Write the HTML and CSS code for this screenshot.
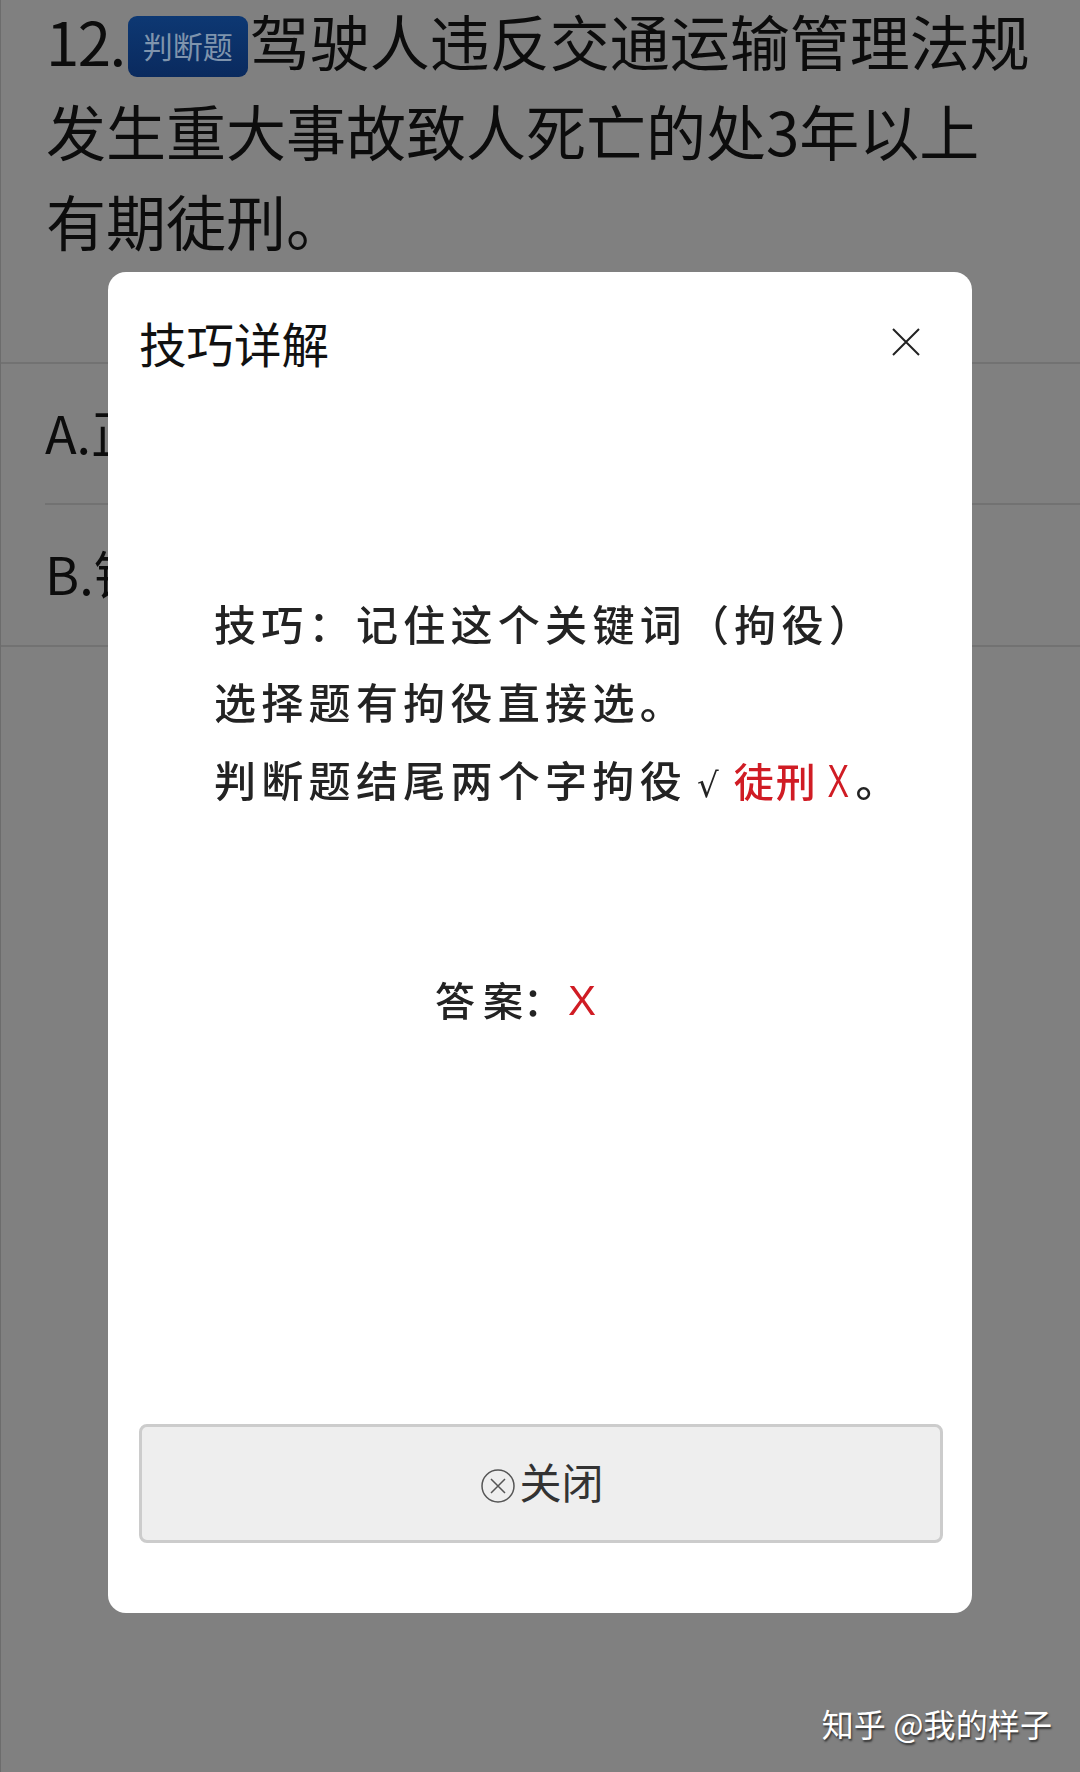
FILE: index.html
```html
<!DOCTYPE html>
<html lang="zh-CN">
<head>
<meta charset="utf-8">
<title>技巧详解</title>
<link rel="stylesheet" href="styles.css">
</head>
<body>
<div class="page">
  <div class="question"><span class="q-num">12.</span><span class="badge">判断题</span>驾驶人违反交通运输管理法规发生重大事故致人死亡的处3年以上有期徒刑。</div>
  <div class="options">
    <div class="option option-a"><span>A.正确</span></div>
    <div class="option option-b"><span>B.错误</span></div>
  </div>
  <div class="modal">
    <div class="modal-head">
      <div class="modal-title">技巧详解</div>
      <svg class="modal-close" viewBox="0 0 28 28" width="28" height="28"><path d="M1 1 L27 27 M27 1 L1 27"/></svg>
    </div>
    <div class="tips">
      <div class="tip-line">技巧&#xFF1A;记住这个关键词&#xFF08;拘役&#xFF09;</div>
      <div class="tip-line">选择题有拘役直接选。</div>
      <div class="tip-line">判断题结尾两个字拘役<span class="tick">√</span><span class="red red-word">徒刑<span class="red-x">X</span></span>。</div>
    </div>
    <div class="answer">答案<span class="answer-colon">&#xFF1A;</span><span class="red answer-x">X</span></div>
    <button class="close-btn">
      <svg class="close-icon" viewBox="0 0 34 34" width="34" height="34"><circle cx="17" cy="17" r="16"/><path d="M10 10 L24 24 M24 10 L10 24"/></svg>
      <span>关闭</span>
    </button>
  </div>
  <div class="watermark">知乎 @我的样子</div>
</div>
</body>
</html>
```

FILE: styles.css
```css
* { box-sizing: border-box; }
html, body { margin: 0; padding: 0; }
body { font-family: "Noto Sans CJK SC", "Noto Sans", sans-serif; }

.page {
  position: relative;
  width: 1080px;
  height: 1772px;
  overflow: hidden;
  background: #808080;
  border-left: 1px solid #6c6c6c;
  color: #0c0c0c;
}

.question {
  margin-top: -5px;
  padding: 0 44px 97px 45px;
  font-size: 60px;
  line-height: 90px;
  font-weight: 400;
}
.q-num { letter-spacing: -1.5px; }
.badge {
  display: inline-block;
  width: 120px;
  height: 61px;
  margin: 0 2px 0 3px;
  vertical-align: 8px;
  border-radius: 9px;
  background: linear-gradient(#0d3873, #0a2a5e);
  color: #7f94ad;
  font-size: 30px;
  font-weight: 400;
  line-height: 59px;
  text-align: center;
}

.options { border-top: 2px solid #727272; border-bottom: 2px solid #727272; }
.option {
  margin-left: 44px;
  font-size: 52px;
  font-weight: 400;
  line-height: 135px;
}
.option-a { height: 141px; border-bottom: 2px solid #727272; }
.option-b { height: 140px; }

.modal {
  position: absolute;
  left: 107px;
  top: 272px;
  width: 864px;
  height: 1341px;
  display: flex;
  flex-direction: column;
  padding: 0 29px 70px 31px;
  background: #fff;
  border-radius: 18px;
}
.modal-head {
  display: flex;
  justify-content: space-between;
  align-items: center;
  height: 140px;
  padding: 0 23px 0 0;
}
.modal-title { font-size: 47.5px; font-weight: 400; color: #111; }
.modal-close { fill: none; stroke: #222; stroke-width: 2; }

.tips {
  margin: 172px 0 0 75px;
  color: #232323;
  filter: blur(0.5px);
}
.tip-line {
  height: 78px;
  font-size: 42px;
  font-weight: 500;
  line-height: 78px;
  letter-spacing: 5.3px;
  white-space: nowrap;
}
.tick {
  font-family: "DejaVu Sans", sans-serif;
  font-size: 34px;
  font-weight: 400;
  margin: 0 15px 0 10px;
  letter-spacing: 0;
}
.red { color: #d01c24; }
.red-word { letter-spacing: 2px; font-size: 40px; }
.red-x {
  display: inline-block;
  font-family: "Liberation Sans", sans-serif;
  font-size: 46px;
  font-weight: 400;
  letter-spacing: 0;
  margin: 0 2px 0 5px;
  transform: scaleX(0.7);
}

.answer {
  display: flex;
  align-items: center;
  margin: 149px 0 0 296px;
  color: #232323;
  font-size: 40px;
  font-weight: 500;
  line-height: 60px;
  letter-spacing: 8px;
  filter: blur(0.5px);
}
.answer-colon { margin: 0 -3px 0 -8px; }
.answer-x {
  margin-top: 4px;
  font-size: 42px;
  font-family: "Liberation Sans", sans-serif;
  font-weight: 400;
}

.close-btn {
  display: flex;
  align-items: center;
  justify-content: center;
  gap: 4px;
  width: 804px;
  height: 119px;
  margin-top: auto;
  padding: 0 0 0 3px;
  background: #eeeeee;
  border: 3px solid #cccccc;
  border-radius: 8px;
  color: #333;
  font-family: inherit;
  font-size: 42px;
  font-weight: 400;
  line-height: 50px;
}
.close-btn span { margin-bottom: 6px; }
.close-icon { fill: none; stroke: #555; stroke-width: 1.5; margin-top: 4px; }

.watermark {
  position: absolute;
  right: 28px;
  top: 1700px;
  color: #fff;
  font-size: 32px;
  font-weight: 400;
  letter-spacing: 0.1px;
  line-height: 46px;
  text-shadow: 1px 2px 2px #333;
  white-space: nowrap;
}
```
